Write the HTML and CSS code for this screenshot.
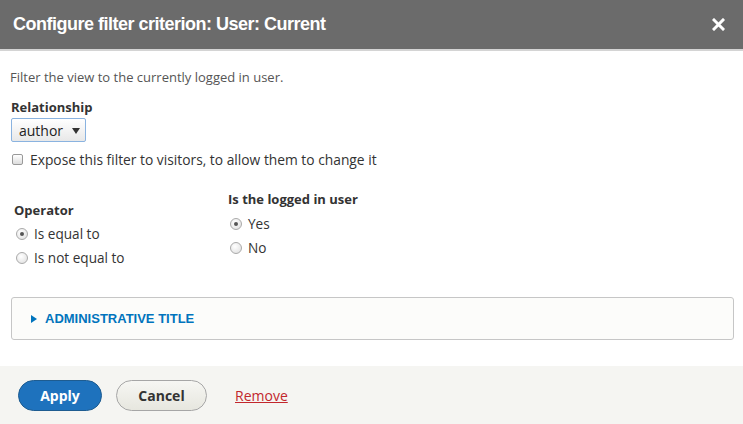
FILE: index.html
```html
<!DOCTYPE html>
<html>
<head>
<meta charset="utf-8">
<link rel="stylesheet" href="styles.css">
</head>
<body>
<div class="dialog">
  <div class="titlebar">
    <h1 class="title">Configure filter criterion: User: Current</h1>
    <svg class="close" width="13" height="13" viewBox="0 0 13 13"><path d="M2 2 L11 11 M11 2 L2 11" stroke="#fff" stroke-width="3" stroke-linecap="square"/></svg>
  </div>
  <div class="content">
    <p class="desc">Filter the view to the currently logged in user.</p>
    <div class="field">
      <div class="label">Relationship</div>
      <div class="select">author <span class="caret"></span></div>
    </div>
    <label class="check"><span class="box"></span>Expose this filter to visitors, to allow them to change it</label>
    <div class="cols">
      <div class="col op">
        <div class="label">Operator</div>
        <div class="radio"><span class="dot on"></span>Is equal to</div>
        <div class="radio"><span class="dot"></span>Is not equal to</div>
      </div>
      <div class="col val">
        <div class="label">Is the logged in user</div>
        <div class="radio"><span class="dot on"></span>Yes</div>
        <div class="radio"><span class="dot"></span>No</div>
      </div>
    </div>
    <div class="details"><span class="tri"></span>ADMINISTRATIVE TITLE</div>
  </div>
  <div class="footer">
    <span class="btn primary">Apply</span>
    <span class="btn">Cancel</span>
    <a class="remove" href="#">Remove</a>
  </div>
</div>
</body>
</html>
```
FILE: styles.css
```css
html, body { margin: 0; padding: 0; }
body { width: 743px; height: 424px; background: #fff; font-family: "Open Sans", sans-serif; color: #333; overflow: hidden; }
.dialog { display: flex; flex-direction: column; height: 424px; }
.titlebar { height: 49px; background: #6b6b6b; border-bottom: 2px solid #d4d4d4; display: flex; align-items: center; justify-content: space-between; padding: 0 19px 0 13px; box-sizing: content-box; }
.title { margin: 0; font-family: "Liberation Sans", sans-serif; font-weight: bold; font-size: 18px; color: #fff; letter-spacing: -0.5px; }
.close { display: block; margin-right: -1px; }
.content { flex: 1; padding: 0 9px 0 11px; }
.desc { margin: 17px 0 0 -1px; font-size: 13px; color: #555; }
.label { font-weight: bold; font-size: 13px; color: #333; }
.field { margin-top: 12px; }
.select { margin-top: 2px; width: 75px; height: 24px; box-sizing: border-box; border: 1px solid #8ab3e0; border-radius: 2px; background: linear-gradient(#fff, #e8e8e8); font-size: 14px; color: #222; display: flex; align-items: center; padding-left: 7px; gap: 9px; }
.caret { width: 0; height: 0; border-left: 4px solid transparent; border-right: 4px solid transparent; border-top: 6px solid #333; margin-top: 2px; }
.check { display: flex; align-items: center; margin-top: 8px; font-size: 13.8px; color: #333; }
.box { width: 9px; height: 9px; border: 1px solid #999; border-radius: 2px; background: linear-gradient(#fff, #ddd); margin: 0 7px 0 1px; }
.cols { display: flex; margin-top: 21px; }
.col.op { width: 214px; padding-left: 3px; padding-top: 11px; }
.col.val { padding-top: 0; }
.radio { display: flex; align-items: center; font-size: 13.6px; color: #333; }
.col.op .radio { margin-top: 5px; }
.col.op .radio + .radio { margin-top: 5px; }
.col.val .radio { margin-top: 6px; }
.col.val .radio + .radio { margin-top: 5px; }
.dot { width: 10px; height: 10px; border-radius: 50%; border: 1px solid #aaa; background: radial-gradient(circle at 40% 35%, #fff, #ddd); margin: 0 6px 0 2px; box-sizing: content-box; position: relative; }
.dot.on::after { content: ""; position: absolute; left: 3px; top: 3px; width: 4px; height: 4px; border-radius: 50%; background: #555; }
.details { margin-top: 30px; height: 43px; box-sizing: border-box; border: 1px solid #c6c6c6; border-radius: 3px; background: #fcfcfa; display: flex; align-items: center; padding-left: 19px; font-family: "Liberation Sans", sans-serif; font-weight: bold; font-size: 13px; color: #0074bd; }
.tri { width: 0; height: 0; border-top: 4px solid transparent; border-bottom: 4px solid transparent; border-left: 6px solid #0074bd; margin-right: 8px; }
.footer { height: 58px; background: #f5f5f2; display: flex; align-items: center; padding-left: 18px; gap: 14px; }
.btn { display: inline-flex; align-items: center; justify-content: center; height: 31px; box-sizing: border-box; border-radius: 16px; font-weight: bold; font-size: 14px; color: #333; border: 1px solid #a6a6a6; background: linear-gradient(#f6f6f3, #e7e7df); width: 91px; }
.btn.primary { width: 84px; background: #1e72bd; border-color: #1e5c90; color: #fff; }
.remove { margin-left: 14px; color: #c2272d; font-size: 14px; text-decoration: underline; }
```
